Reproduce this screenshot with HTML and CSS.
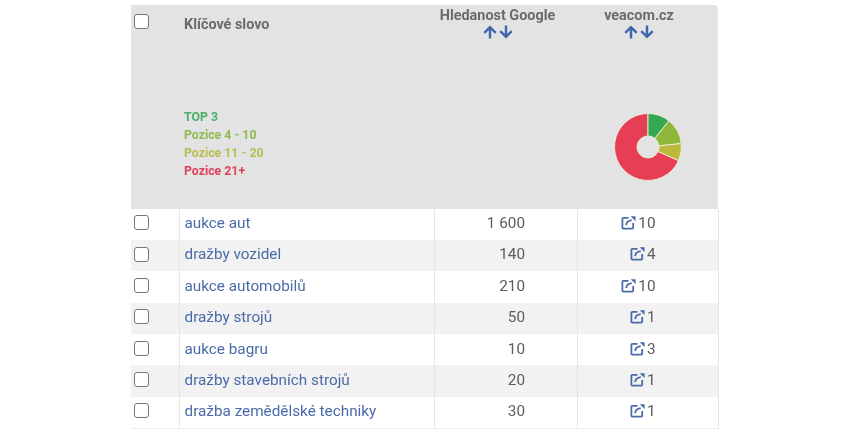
FILE: index.html
```html
<!DOCTYPE html>
<html lang="cs">
<head>
<meta charset="utf-8">
<title>Klíčová slova</title>
<link rel="stylesheet" href="styles.css">
</head>
<body>
<svg class="defs" width="0" height="0" aria-hidden="true">
  <symbol id="ext" viewBox="0 0 16 16">
    <path d="M8 3H2.500A1 1 0 0 0 1.500 4v9.500a1 1 0 0 0 1 1H12a1 1 0 0 0 1-1V8.500" fill="none" stroke="currentColor" stroke-width="1.900"/>
    <path d="M5.500 10.800C5.700 7.800 8 5.800 11.500 5.400" fill="none" stroke="currentColor" stroke-width="1.900"/>
    <path d="M10.300 1.200H15.500V6.400Z" fill="currentColor"/>
  </symbol>
  <symbol id="up" viewBox="0 0 14 14">
    <path d="M7 13.500V2.500M1.300 7.800 7 2.100l5.700 5.700" fill="none" stroke="currentColor" stroke-width="2.400"/>
  </symbol>
  <symbol id="down" viewBox="0 0 14 14">
    <path d="M7 .5v11M1.300 6.200 7 11.900l5.700-5.700" fill="none" stroke="currentColor" stroke-width="2.400"/>
  </symbol>
</svg>
<main class="page">
<table class="kw">
  <colgroup>
    <col class="c-check"><col class="c-word"><col class="c-vol"><col class="c-site">
  </colgroup>
  <thead>
    <tr>
      <th class="h-check"><input type="checkbox" class="box"></th>
      <th class="h-word">
        <div class="h-stack">
          <span class="h-title">Klíčové slovo</span>
          <ul class="legend">
            <li class="l1">TOP 3</li>
            <li class="l2">Pozice 4 - 10</li>
            <li class="l3">Pozice 11 - 20</li>
            <li class="l4">Pozice 21+</li>
          </ul>
        </div>
      </th>
      <th class="h-num">
        <div class="h-title">Hledanost Google</div>
        <div class="sort"><svg class="arrow"><use href="#up"/></svg><svg class="arrow"><use href="#down"/></svg></div>
      </th>
      <th class="h-num h-site">
        <div class="h-title">veacom.cz</div>
        <div class="sort"><svg class="arrow"><use href="#up"/></svg><svg class="arrow"><use href="#down"/></svg></div>
        <svg class="pie" viewBox="-35 -35 70 70" role="img" aria-label="Podíl pozic">
          <g stroke="#eef0dc" stroke-width="0.900">
            <path fill="#e63e55" d="M30.600 13.600A33.500 33.500 0 1 1 0-33.500V-11A11 11 0 1 0 10 4.500Z"/>
            <path fill="#35a852" d="M0-33.500A33.500 33.500 0 0 1 20.900-26.200L6.900-8.600A11 11 0 0 0 0-11Z"/>
            <path fill="#8db83a" d="M20.900-26.200A33.500 33.500 0 0 1 33.300-3.500L10.900-1.100A11 11 0 0 0 6.900-8.600Z"/>
            <path fill="#bdb93c" d="M33.300-3.500A33.500 33.500 0 0 1 30.600 13.600L10 4.500A11 11 0 0 0 10.900-1.100Z"/>
          </g>
        </svg>
      </th>
    </tr>
  </thead>
  <tbody>
    <tr><td class="t-check"><input type="checkbox" class="box"></td><td class="t-word"><a href="#">aukce aut</a></td><td class="t-num">1 600</td><td class="t-site"><svg class="ext"><use href="#ext"/></svg>10</td></tr>
    <tr><td class="t-check"><input type="checkbox" class="box"></td><td class="t-word"><a href="#">dražby vozidel</a></td><td class="t-num">140</td><td class="t-site"><svg class="ext"><use href="#ext"/></svg>4</td></tr>
    <tr><td class="t-check"><input type="checkbox" class="box"></td><td class="t-word"><a href="#">aukce automobilů</a></td><td class="t-num">210</td><td class="t-site"><svg class="ext"><use href="#ext"/></svg>10</td></tr>
    <tr><td class="t-check"><input type="checkbox" class="box"></td><td class="t-word"><a href="#">dražby strojů</a></td><td class="t-num">50</td><td class="t-site"><svg class="ext"><use href="#ext"/></svg>1</td></tr>
    <tr><td class="t-check"><input type="checkbox" class="box"></td><td class="t-word"><a href="#">aukce bagru</a></td><td class="t-num">10</td><td class="t-site"><svg class="ext"><use href="#ext"/></svg>3</td></tr>
    <tr><td class="t-check"><input type="checkbox" class="box"></td><td class="t-word"><a href="#">dražby stavebních strojů</a></td><td class="t-num">20</td><td class="t-site"><svg class="ext"><use href="#ext"/></svg>1</td></tr>
    <tr><td class="t-check"><input type="checkbox" class="box"></td><td class="t-word"><a href="#">dražba zemědělské techniky</a></td><td class="t-num">30</td><td class="t-site"><svg class="ext"><use href="#ext"/></svg>1</td></tr>
  </tbody>
</table>
</main>
</body>
</html>
```

FILE: styles.css
```css
* { box-sizing: border-box; }
html, body { margin: 0; background: #fff; }
body {
  width: 856px;
  height: 431px;
  overflow: hidden;
  font-family: Roboto, "Liberation Sans", sans-serif;
  color: #5c5c5c;
}
.defs { display: block; height: 0; }
.page { padding: 5px 0 0 131px; filter: blur(0.5px); }

.kw {
  width: 587px;
  table-layout: fixed;
  border-collapse: collapse;
  font-size: 15.300px;
}
.c-check { width: 48px; }
.c-word { width: 255px; }
.c-vol { width: 143px; }
.c-site { width: 141px; }

thead tr { height: 203.500px; background: #e3e3e3; }
th { padding: 0; vertical-align: top; }
.h-title { font-size: 14.400px; font-weight: 700; color: #6b6b6b; line-height: 17px; }
.h-check { padding: 9px 0 0 3px; text-align: left; }
.h-word { text-align: left; padding: 11px 0 0 5px; }
.h-stack { display: flex; flex-direction: column; gap: 75px; }
.legend { list-style: none; margin: 0; padding: 0; font-size: 12.300px; font-weight: 700; line-height: 18px; }
.l1 { color: #4caf6a; }
.l2 { color: #8fba4e; }
.l3 { color: #b9bd52; }
.l4 { color: #e2405c; }
.h-num { text-align: center; padding: 2px 16px 0 0; }
.h-site { border-top-right-radius: 4px; padding-right: 17px; }
.sort { display: flex; justify-content: center; gap: 2px; margin-top: 1px; color: #3f66ad; height: 16px; }
.arrow { width: 14px; height: 14px; }
.pie { display: block; width: 70px; height: 70px; margin: 71px 0 0 35.500px; }

.box {
  appearance: none;
  display: block;
  width: 15px;
  height: 15px;
  margin: 0;
  background: #fff;
  border: 1.500px solid #767676;
  border-radius: 3px;
}
tbody tr { height: 31.400px; }
tbody tr:nth-child(even) { background: #f2f2f2; }
tbody tr:last-child { border-bottom: 1px solid #eee; }
td { padding: 0 0 2.500px; }
.t-check { padding: 0 0 3px 2.500px; }
.t-word { padding-left: 5px; border-left: 1px solid #e6e6e6; }
.t-word a { color: #4a6ba8; text-decoration: none; }
.t-num { text-align: right; padding-right: 51.500px; border-left: 1px solid #e6e6e6; }
.t-site { text-align: right; padding-right: 62px; border-left: 1px solid #e6e6e6; border-right: 1px solid #e6e6e6; white-space: nowrap; }
.ext { width: 15px; height: 15px; color: #4a6ba8; vertical-align: -2px; margin-right: 2px; }
```
